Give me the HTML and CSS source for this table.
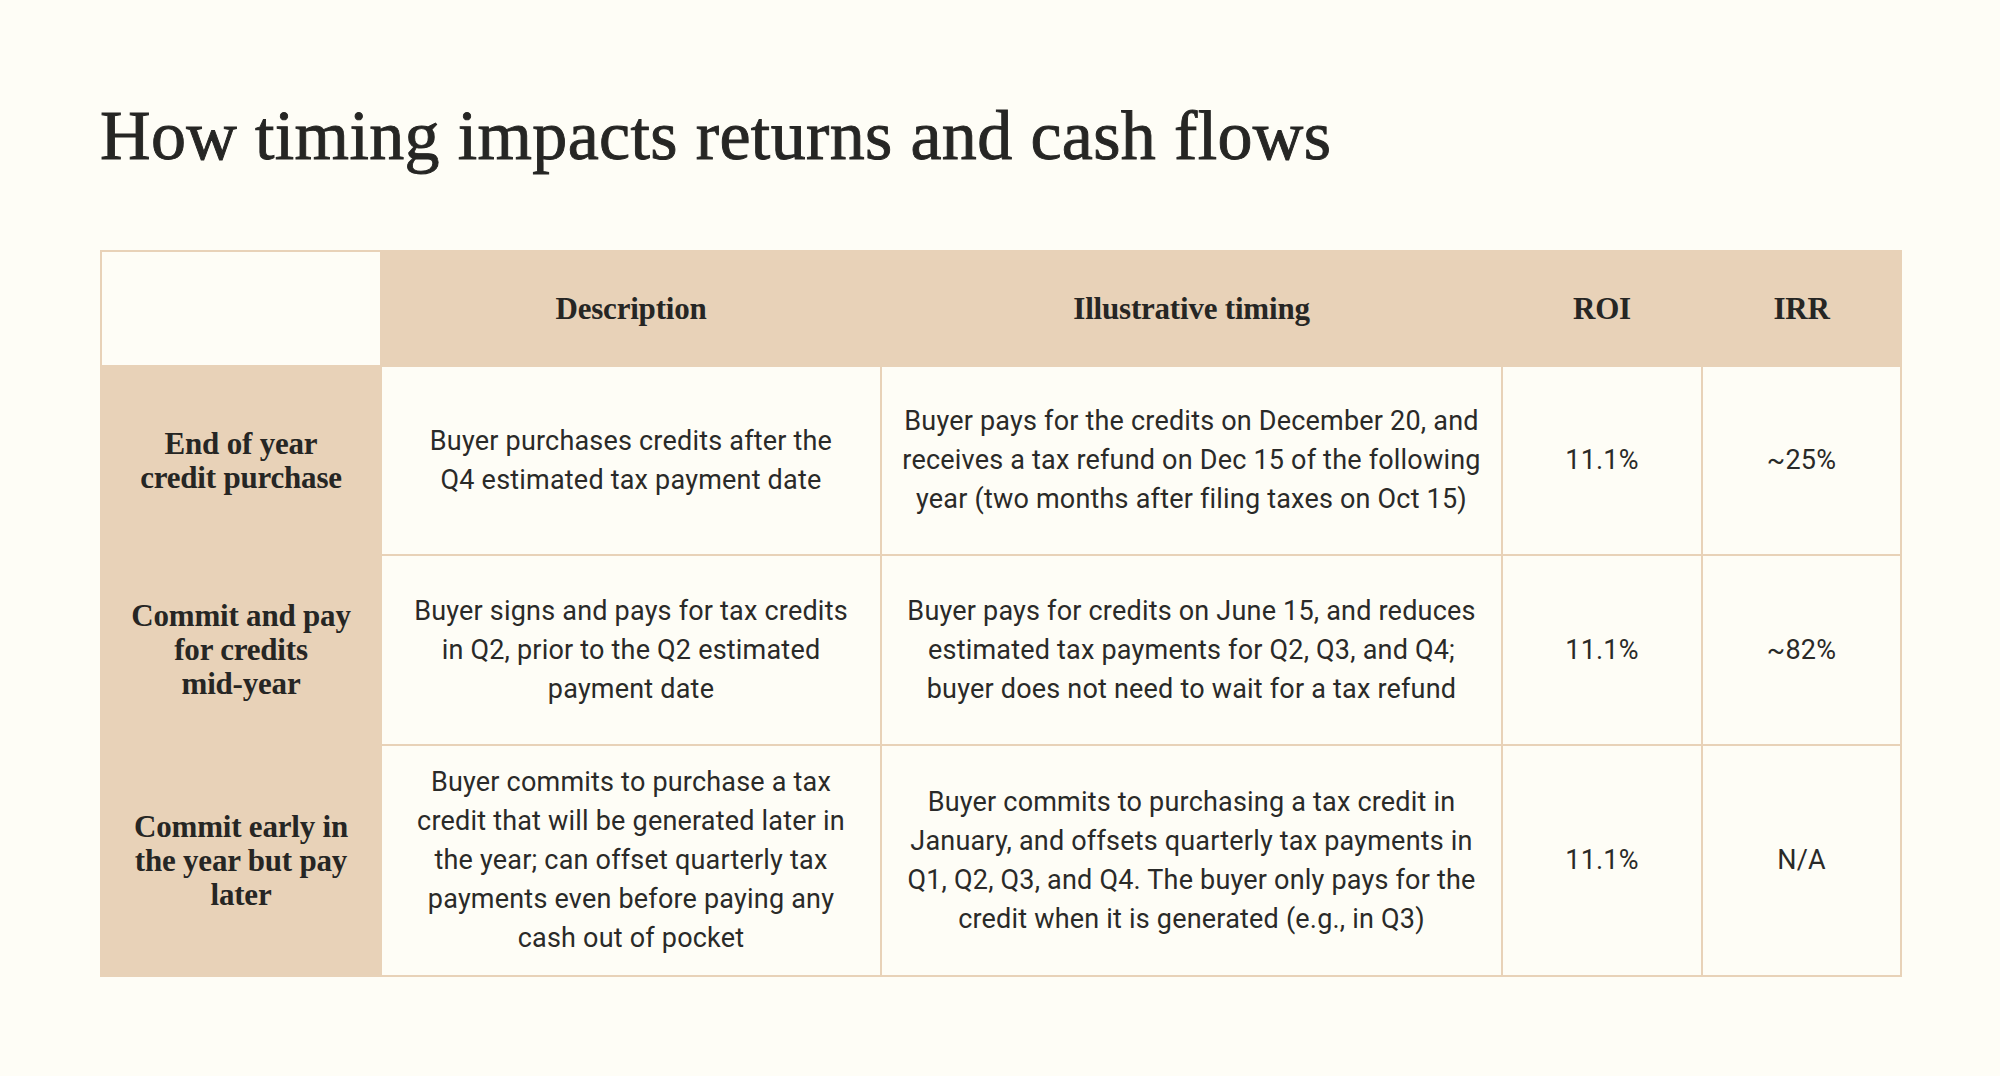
FILE: index.html
```html
<!DOCTYPE html>
<html lang="en">
<head>
<meta charset="utf-8">
<title>How timing impacts returns and cash flows</title>
<link rel="stylesheet" href="styles.css">
</head>
<body>
<main class="page">
  <h1 class="title">How timing impacts returns and cash flows</h1>
  <table class="grid">
    <colgroup>
      <col class="c-label">
      <col class="c-desc">
      <col class="c-timing">
      <col class="c-roi">
      <col class="c-irr">
    </colgroup>
    <thead>
      <tr class="head-row">
        <th class="corner"></th>
        <th>Description</th>
        <th>Illustrative timing</th>
        <th>ROI</th>
        <th>IRR</th>
      </tr>
    </thead>
    <tbody>
      <tr class="row-1">
        <th class="label">End of year<br>credit purchase</th>
        <td>Buyer purchases credits after the<br>Q4 estimated tax payment date</td>
        <td>Buyer pays for the credits on December 20, and<br>receives a tax refund on Dec 15 of the following<br>year (two months after filing taxes on Oct 15)</td>
        <td>11.1%</td>
        <td>~25%</td>
      </tr>
      <tr class="row-2">
        <th class="label">Commit and pay<br>for credits<br>mid-year</th>
        <td>Buyer signs and pays for tax credits<br>in Q2, prior to the Q2 estimated<br>payment date</td>
        <td>Buyer pays for credits on June 15, and reduces<br>estimated tax payments for Q2, Q3, and Q4;<br>buyer does not need to wait for a tax refund</td>
        <td>11.1%</td>
        <td>~82%</td>
      </tr>
      <tr class="row-3">
        <th class="label">Commit early in<br>the year but pay<br>later</th>
        <td>Buyer commits to purchase a tax<br>credit that will be generated later in<br>the year; can offset quarterly tax<br>payments even before paying any<br>cash out of pocket</td>
        <td>Buyer commits to purchasing a tax credit in<br>January, and offsets quarterly tax payments in<br>Q1, Q2, Q3, and Q4. The buyer only pays for the<br>credit when it is generated (e.g., in Q3)</td>
        <td>11.1%</td>
        <td>N/A</td>
      </tr>
    </tbody>
  </table>
</main>
</body>
</html>
```

FILE: styles.css
```css
html, body {
  margin: 0;
  padding: 0;
  background: #fefdf6;
}

.page {
  padding: 96px 100px 0 100px;
  color: #262624;
}

.title {
  margin: 0 0 74px 0;
  font-family: "Liberation Serif", "Times New Roman", serif;
  font-weight: 400;
  font-size: 70px;
  line-height: 80px;
  letter-spacing: 0.35px;
  color: #262624;
  -webkit-text-stroke: 0.9px #262624;
}

.grid {
  width: 1800px;
  border-collapse: collapse;
  table-layout: fixed;
}

.c-label { width: 280px; }
.c-desc { width: 500px; }
.c-timing { width: 621px; }
.c-roi { width: 200px; }
.c-irr { width: 199px; }

.grid th,
.grid td {
  border: 2px solid #e8d2b8;
  text-align: center;
  vertical-align: middle;
  padding: 0 6px;
}

.head-row th {
  height: 113px;
  background: #e8d2b8;
  font-family: "Liberation Serif", "Times New Roman", serif;
  font-weight: 700;
  font-size: 31px;
  letter-spacing: -0.2px;
  color: #262624;
}

.head-row .corner {
  background: #fefdf6;
}

.label {
  background: #e8d2b8;
  font-family: "Liberation Serif", "Times New Roman", serif;
  font-weight: 700;
  font-size: 31px;
  line-height: 34px;
  letter-spacing: -0.2px;
  color: #262624;
}

.grid td {
  font-family: Roboto, "Liberation Sans", sans-serif;
  font-size: 27px;
  line-height: 39px;
  letter-spacing: 0.2px;
  color: #2a2a28;
}

.row-1 th, .row-1 td { height: 187px; }
.row-2 th, .row-2 td { height: 188px; }
.row-3 th, .row-3 td { height: 229px; }
```
